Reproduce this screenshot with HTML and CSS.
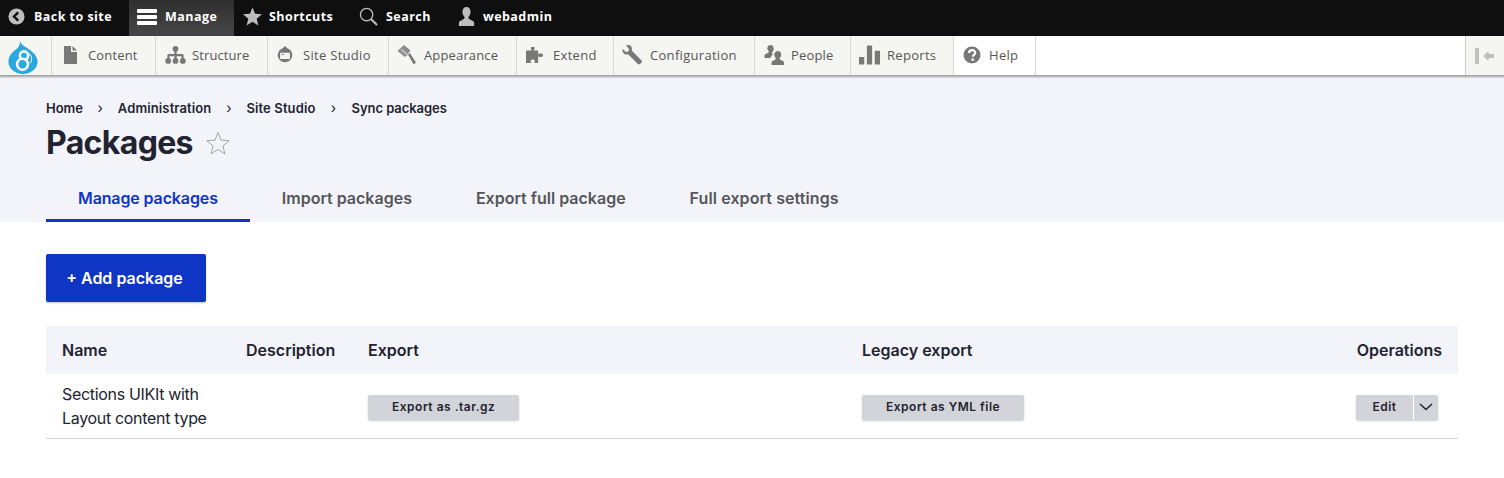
FILE: index.html
```html
<!DOCTYPE html>
<html lang="en">
<head>
<meta charset="utf-8">
<title>Packages</title>
<link rel="stylesheet" href="styles.css">
</head>
<body>
<div class="bar">
  <a class="bar-item back"><svg class="bi" viewBox="0 0 18 18"><circle cx="9" cy="9" r="8.5" fill="#bdbdbd"/><path d="M10.8 4.6 6.4 9l4.4 4.4" fill="none" stroke="#111" stroke-width="2.6"/></svg>Back to site</a>
  <a class="bar-item manage"><svg class="bi-m" viewBox="0 0 20 16"><path d="M1 0h18a1 1 0 0 1 1 1v2a1 1 0 0 1-1 1H1a1 1 0 0 1-1-1V1a1 1 0 0 1 1-1zm0 6h18a1 1 0 0 1 1 1v2a1 1 0 0 1-1 1H1a1 1 0 0 1-1-1V7a1 1 0 0 1 1-1zM1 12h18a1 1 0 0 1 1 1v2a1 1 0 0 1-1 1H1a1 1 0 0 1-1-1v-2a1 1 0 0 1 1-1z" fill="#fff"/></svg>Manage</a>
  <a class="bar-item shortcuts"><svg class="bi-s" viewBox="0 0 20 19"><path d="M10 0l2.700 6.700 7.300.5-5.600 4.600 1.800 7.200L10 15.100 3.800 19l1.800-7.200L0 7.200l7.300-.5z" fill="#bdbdbd"/></svg>Shortcuts</a>
  <a class="bar-item search"><svg class="bi-s" viewBox="0 0 20 20"><circle cx="8" cy="8" r="6.500" fill="none" stroke="#bdbdbd" stroke-width="1.400"/><path d="M12.800 12.800 19 19" stroke="#bdbdbd" stroke-width="2.200"/></svg>Search</a>
  <a class="bar-item user"><svg class="bi-s" viewBox="0 0 20 20"><path d="M10 0c2.800 0 4.300 2.200 4.300 5 0 2.200-.9 4.300-2.200 5.500-.5 1.300.2 2 2 2.800 2.300.9 3.900 1.700 3.900 3.200V20H2v-3.500c0-1.500 1.600-2.300 3.900-3.200 1.800-.8 2.500-1.500 2-2.800C6.600 9.300 5.700 7.200 5.700 5 5.700 2.200 7.200 0 10 0z" fill="#bdbdbd"/></svg>webadmin</a>
</div>
<nav class="tray">
  <a class="logo"><svg viewBox="0 0 30 34" width="30" height="34"><path d="M12 0c.6 3 3 4.500 6 6.500C24.500 10.500 30 15 30 21.500 30 28.500 23.500 34 15 34S0 28.500 0 21.500C0 15 4.500 11 8 8.500 10.500 6.500 12 4 12 0z" fill="#29a8df"/><circle cx="16" cy="15" r="4.300" fill="none" stroke="#fff" stroke-width="2.600"/><circle cx="14.500" cy="24" r="5.600" fill="#29a8df" stroke="#fff" stroke-width="2.600"/><path d="M20 12c4 2.500 5 7 2.500 11" fill="none" stroke="#fff" stroke-width="1"/></svg></a>
  <a class="tool content"><svg class="ti" viewBox="0 0 16 18"><path d="M1 0h7v6h6v12H1zM9.500 0 14 4.600H9.500z" fill="#787878"/></svg>Content</a>
  <a class="tool structure"><svg class="ti-w" viewBox="0 0 22 19"><circle cx="11" cy="3" r="3" fill="#787878"/><path d="M9.800 4h2.400v4.500H18a1.500 1.500 0 0 1 1.500 1.500v4h-2.200v-3.300h-5.100V14H9.800v-3.300H4.700V14H2.500v-4A1.500 1.500 0 0 1 4 8.500h5.800z" fill="#787878"/><circle cx="3.300" cy="15.700" r="3" fill="#787878"/><circle cx="11" cy="15.700" r="3" fill="#787878"/><circle cx="18.700" cy="15.700" r="3" fill="#787878"/></svg>Structure</a>
  <a class="tool studio"><svg class="ti" viewBox="0 0 18 20"><path d="M9 0l2.500 2.400A8 8 0 1 1 6.500 2.400z" fill="#787878"/><rect x="3.500" y="7.500" width="11" height="7" rx="1" fill="#f5f5f2"/><rect x="5" y="9" width="3" height="1" fill="#787878"/></svg>Site Studio</a>
  <a class="tool appearance"><svg class="ti-w" viewBox="0 0 20 20"><path d="M7.500 0l6.500 5.500-5.500 6.500L1 6z" fill="#8a8a8a"/><path d="M5.500 3.500l6.500 5.500-1.500 2-6.500-5.500z" fill="#b5b5b5"/><path d="M11.500 9.500l1.800-1.500 6.200 9.500-2.300 2z" fill="#787878"/></svg>Appearance</a>
  <a class="tool extend"><svg class="ti" viewBox="0 0 20 18"><path d="M5.500 0h4v2.500c-.7.500-1 1-1 1.500h5v4.500c1-1.500 2-1.200 3-1.200 1.300 0 2.500.8 2.500 2s-1.200 2-2.500 2c-1 0-2 .3-3-1.200V18H9c.7-1 .8-1.700.8-2.300 0-1-.9-1.700-2.300-1.700s-2.300.7-2.300 1.700c0 .6.100 1.300.8 2.300H0V4h6.500c0-.5-.3-1-1-1.500z" fill="#787878"/></svg>Extend</a>
  <a class="tool config"><svg class="ti-w" viewBox="0 0 20 20"><path d="M5.500 0C7.800 0 9.500 1.600 9.500 4c0 .6-.1 1.100-.3 1.600L19 15.400c.6.600.6 1.500 0 2.100l-1.500 1.500c-.6.600-1.500.6-2.100 0L5.600 9.200c-.5.2-1 .3-1.600.3C1.600 9.500 0 7.800 0 5.500c0-.6.100-1.100.3-1.500L3.400 7.100l2.500-.6.600-2.500L3.500.3C4.100.1 4.800 0 5.500 0z" fill="#787878"/></svg>Configuration</a>
  <a class="tool people"><svg class="ti-w" viewBox="0 0 20 20"><path d="M6 0c2 0 3.200 1.600 3.200 3.600 0 1.700-.6 3-1.500 3.900-.3.900.1 1.500 1 2-1.500.7-2.400 1.600-2.700 3.500H0v-2.500c0-1.100 1.100-1.700 2.800-2.300 1.200-.5 1.800-1 1.500-1.900C3.400 5.400 2.800 4.300 2.800 3.600 2.800 1.600 4 0 6 0z" fill="#787878"/><path d="M13.500 6c2 0 3.200 1.500 3.200 3.400 0 1.600-.6 2.800-1.500 3.700-.3 1 .3 1.500 1.700 2.100 1.700.6 2.600 1.200 2.600 2.200V20H7v-2.600c0-1 .9-1.600 2.600-2.200 1.400-.6 2-1.100 1.700-2.100-.9-.9-1.500-2.100-1.500-3.700C9.800 7.500 11.500 6 13.500 6z" fill="#787878"/></svg>People</a>
  <a class="tool reports"><svg class="ti-w" viewBox="0 0 20 18"><path d="M0 11h5v7H0zM7.500 0h5v18h-5zM15 5h5v13h-5z" fill="#787878"/></svg>Reports</a>
  <a class="tool help"><svg class="ti" viewBox="0 0 18 18"><circle cx="9" cy="9" r="8.500" fill="#787878"/><path d="M6 7c0-3.800 6.200-3.800 6.200-.2 0 2-2.400 2.100-2.400 4" fill="none" stroke="#fff" stroke-width="2.200"/><rect x="8.400" y="12.400" width="2.600" height="2.400" fill="#fff"/></svg>Help</a>
  <span class="tray-fill"></span>
  <a class="tray-toggle"><svg viewBox="0 0 20 16" width="20" height="16"><rect x="0" y="0" width="4" height="16" fill="#bfbfbf"/><path d="M8 8l5.500-5v3H19v4h-5.500v3z" fill="#bfbfbf"/></svg></a>
</nav>
<header class="page-head">
  <ol class="crumbs">
    <li class="tight">Home</li><li class="sep">›</li><li>Administration</li><li class="sep">›</li><li>Site Studio</li><li class="sep last-sep">›</li><li class="tight">Sync packages</li>
  </ol>
  <div class="title-row">
    <h1>Packages</h1>
    <svg class="fav" viewBox="0 0 24 24"><path d="M12 1.500l3 7.600 8.200.6-6.300 5.200 2 8-6.900-4.400-6.900 4.400 2-8L.8 9.700 9 9.100z" fill="none" stroke="#a4a5ab" stroke-width="1"/></svg>
  </div>
  <ul class="tabs">
    <li class="tab active">Manage packages</li>
    <li class="tab">Import packages</li>
    <li class="tab">Export full package</li>
    <li class="tab wide">Full export settings</li>
  </ul>
</header>
<main class="main">
  <a class="primary">+ Add package</a>
  <table class="grid">
    <thead>
      <tr><th class="c-name">Name</th><th class="c-desc">Description</th><th class="c-exp">Export</th><th class="c-leg">Legacy export</th><th class="c-ops">Operations</th></tr>
    </thead>
    <tbody>
      <tr>
        <td class="name-cell">Sections UIKIt with<br>Layout content type</td>
        <td></td>
        <td class="btn-cell"><a class="small">Export as .tar.gz</a></td>
        <td class="btn-cell"><a class="small">Export as YML file</a></td>
        <td class="btn-cell ops"><span class="drop"><a class="drop-main">Edit</a><a class="drop-toggle"><svg viewBox="0 0 14 8" width="14" height="8"><path d="M1 1l6 5.500L13 1" fill="none" stroke="#222330" stroke-width="1.600"/></svg></a></span></td>
      </tr>
    </tbody>
  </table>
</main>
</body>
</html>
```
FILE: styles.css
```css
* { box-sizing: border-box; }
html, body { margin: 0; padding: 0; }
body { background: #fff; color: #222330; font-family: Inter, "Liberation Sans", sans-serif; height: 478px; overflow: hidden; }
ul, ol { list-style: none; margin: 0; padding: 0; }

.bar { display: flex; height: 36px; background: #0f0f0f; color: #fff; font-family: "Open Sans", "DejaVu Sans", sans-serif; font-size: 12.500px; font-weight: 700; letter-spacing: .45px; }
.bar-item { display: flex; align-items: center; white-space: nowrap; padding-bottom: 3px; }
.back { width: 129px; padding-left: 8px; gap: 9px; }
.manage { width: 105px; padding-left: 8px; gap: 8px; background: linear-gradient(#2e2e2e, #474747); }
.shortcuts { width: 116px; padding-left: 9px; gap: 7px; }
.search { width: 97px; padding-left: 9px; gap: 8px; }
.user { padding-left: 10px; gap: 7px; }
.bi { width: 17px; height: 17px; }
.bi-m { width: 20px; height: 16px; }
.bi-s { width: 19px; height: 19px; }

.tray { display: flex; height: 39px; background: #fff; box-shadow: 0 1px 2px 1px rgba(0,0,0,.35); position: relative; font-family: "Open Sans", "DejaVu Sans", sans-serif; font-size: 13px; color: #565656; letter-spacing: .3px; }
.logo { display: flex; align-items: flex-start; justify-content: center; width: 52px; padding: 5px 5px 0 0; background: #f5f5f2; border-right: 1px solid #d8d8d4; }
.logo svg { width: 30px; height: 33px; }
.tool { display: flex; align-items: center; gap: 9px; padding-bottom: 2px; background: #f5f5f2; border-right: 1px solid #d8d8d4; white-space: nowrap; }
.ti { width: 18px; height: 18px; flex: none; }
.ti-w { width: 21px; height: 20px; flex: none; }
.content { width: 104px; padding-left: 10px; gap: 8px; letter-spacing: .15px; }
.structure { width: 112px; padding-left: 9px; gap: 6px; letter-spacing: .1px; }
.studio { width: 121px; padding-left: 8px; }
.appearance { width: 128px; padding-left: 7px; gap: 7px; letter-spacing: .15px; }
.extend { width: 97px; padding-left: 9px; gap: 9px; }
.config { width: 141px; padding-left: 8px; gap: 7px; }
.people { width: 96px; padding-left: 9px; gap: 6px; letter-spacing: .15px; }
.reports { width: 103px; padding-left: 8px; gap: 7px; }
.help { width: 82px; padding-left: 9px; gap: 8px; background: #fff; }
.tray-fill { flex: 1; border-right: 1px solid #c9c9c9; }
.tray-toggle { display: flex; align-items: center; justify-content: center; width: 38px; background: #f5f5f2; }

.page-head { background: #f3f4f9; height: 147px; padding: 25px 0 0 46px; }
.crumbs { display: flex; font-size: 13px; font-weight: 600; line-height: 16px; color: #222330; letter-spacing: .12px; }
.crumbs .tight { letter-spacing: -.05px; }
.sep { font-weight: 400; width: 35px; text-align: center; font-size: 14px; }
.last-sep { width: 36px; }
.title-row { display: flex; align-items: center; height: 40px; margin-top: 7px; gap: 13px; }
h1 { margin: 0; font-size: 32px; font-weight: 700; line-height: 40px; color: #222330; letter-spacing: -.65px; }
.fav { width: 24px; height: 24px; }
.tabs { display: flex; margin-top: 13px; font-size: 16px; font-weight: 600; color: #55565b; }
.tab { height: 46px; padding: 12px 32px 0; line-height: 20px; white-space: nowrap; }
.tab.active { color: #0f35c4; border-bottom: 3px solid #0f35c4; letter-spacing: -.12px; }
.tab.wide { letter-spacing: .1px; }

.main { padding: 32px 46px 0; }
.primary { display: flex; align-items: center; justify-content: center; width: 160px; height: 48px; padding-right: 3px; background: #0f35c4; color: #fff; border-radius: 2px; font-size: 16px; font-weight: 600; box-shadow: 0 1px 2px rgba(0,0,0,.25); }
.grid { width: 1412px; margin-top: 24px; border-collapse: collapse; table-layout: fixed; font-size: 16px; }
th { background: #f3f4f9; height: 48px; padding: 0 16px; text-align: left; font-weight: 600; color: #222330; white-space: nowrap; }
.c-name { width: 184px; }
.c-desc { width: 122px; }
.c-exp { width: 494px; }
.c-leg { width: 432px; }
.c-ops { text-align: right; }
td { height: 64px; padding: 8px 16px; line-height: 24px; border-bottom: 1px solid #d3d4d9; vertical-align: middle; white-space: nowrap; }
.name-cell { letter-spacing: -.32px; }
.btn-cell { padding-top: 9px; padding-bottom: 8px; }
.small { display: inline-block; height: 25px; padding: 0 24px; background: #d3d4d9; color: #222330; border-radius: 2px; font-size: 12px; font-weight: 600; line-height: 24px; letter-spacing: .5px; box-shadow: 0 1px 2px rgba(0,0,0,.2); vertical-align: middle; }
.ops { text-align: right; padding-right: 20px; }
.drop { display: inline-flex; height: 25px; border-radius: 2px; background: #d3d4d9; box-shadow: 0 1px 2px rgba(0,0,0,.2); vertical-align: middle; font-size: 12px; font-weight: 600; line-height: 24px; letter-spacing: .5px; }
.drop-main { width: 57px; text-align: center; }
.drop-toggle { display: flex; align-items: center; justify-content: center; width: 25px; border-left: 1px solid #fff; }
```
